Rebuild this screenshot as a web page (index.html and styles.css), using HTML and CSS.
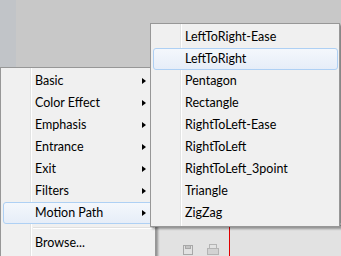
FILE: index.html
```html
<!DOCTYPE html>
<html lang="en">
<head>
    <meta charset="UTF-8">
    <meta name="viewport" content="width=device-width, initial-scale=1.0">
    <title>Motion Path Menu</title>
    <link rel="stylesheet" href="styles.css">
</head>
<body>
    <div class="app">
        <div class="top">
            <div class="strip"></div>
        </div>
        <div class="bottom">
            <div class="bottom-inner">
                <div class="tools">
                    <svg class="tool" width="12" height="12" viewBox="0 0 12 12">
                        <rect x="1.5" y="1.5" width="9" height="9" fill="none" stroke="#a8a8a8"/>
                        <rect x="3.5" y="1.5" width="5" height="3" fill="#c4c4c4" stroke="#a8a8a8"/>
                    </svg>
                    <svg class="tool" width="14" height="12" viewBox="0 0 14 12">
                        <rect x="3.5" y="0.5" width="7" height="4" fill="none" stroke="#b4b4b4"/>
                        <rect x="1.5" y="4.5" width="11" height="6" fill="#d2d2d2" stroke="#b4b4b4"/>
                    </svg>
                </div>
                <div class="playhead"></div>
            </div>
        </div>
    </div>

    <!-- Main context menu -->
    <div class="menu main-menu">
        <div class="item">Basic<span class="arrow"></span></div>
        <div class="item">Color Effect<span class="arrow"></span></div>
        <div class="item">Emphasis<span class="arrow"></span></div>
        <div class="item">Entrance<span class="arrow"></span></div>
        <div class="item">Exit<span class="arrow"></span></div>
        <div class="item">Filters<span class="arrow"></span></div>
        <div class="item hot">Motion Path<span class="arrow"></span></div>
        <div class="separator"></div>
        <div class="item">Browse...</div>
    </div>

    <!-- Motion Path submenu -->
    <div class="menu sub-menu">
        <div class="item">LeftToRight-Ease</div>
        <div class="item hot">LeftToRight</div>
        <div class="item">Pentagon</div>
        <div class="item">Rectangle</div>
        <div class="item">RightToLeft-Ease</div>
        <div class="item">RightToLeft</div>
        <div class="item">RightToLeft_3point</div>
        <div class="item">Triangle</div>
        <div class="item">ZigZag</div>
    </div>
</body>
</html>
```

FILE: styles.css
```css
body {
    margin: 0;
    width: 341px;
    height: 256px;
    overflow: hidden;
    background-color: #c8c8c8;
    font-family: "Lato", "Liberation Sans", sans-serif;
    font-size: 12.5px;
    color: #000;
}

.app {
    display: flex;
    flex-direction: column;
    height: 256px;
}

.top {
    height: 228px;
}

.strip {
    width: 16px;
    height: 67px;
    background-color: #c1c4c8;
}

.bottom {
    flex: 1;
    background-color: #eeeeee;
    padding-top: 2px;
}

.bottom-inner {
    display: flex;
    height: 100%;
    border-top: 1px dotted #b4b4b4;
    background-color: #e2e2e2;
    overflow: hidden;
}

.tools {
    display: flex;
    gap: 12px;
    width: 229px;
    padding: 18px 0 0 182px;
    box-sizing: border-box;
}

.playhead {
    width: 1px;
    background-color: #e00000;
}

/* menus */
.menu {
    position: absolute;
    background-color: #f0f0f0;
    border: 1px solid #979797;
    padding: 2px 1px 2px 2px;
    box-shadow: 2px 2px 2px rgba(0, 0, 0, 0.35);
    background-image: linear-gradient(to right, transparent 29px, #e2e3e3 29px, #e2e3e3 30px, #ffffff 30px, #ffffff 31px, transparent 31px);
}

.main-menu {
    left: 0;
    top: 67px;
    bottom: 0;
    width: 151px;
    border-bottom: 0;
    padding-bottom: 0;
    overflow: hidden;
}

.sub-menu {
    left: 150px;
    top: 23px;
    width: 185px;
    z-index: 2;
}

.item {
    position: relative;
    height: 22px;
    line-height: 22px;
    padding-left: 32px;
    white-space: nowrap;
}

.item.hot {
    border: 1px solid #aed0f4;
    border-radius: 3px;
    height: 20px;
    line-height: 20px;
    padding-left: 31px;
    background: linear-gradient(to bottom, #f4f7fc, #e6edf8);
}

.arrow {
    position: absolute;
    right: 8px;
    top: 8px;
    width: 0;
    height: 0;
    border-left: 4px solid #000;
    border-top: 3.5px solid transparent;
    border-bottom: 3.5px solid transparent;
}

.item.hot .arrow {
    top: 7px;
    right: 7px;
}

.separator {
    height: 8px;
    margin-left: 30px;
    background: linear-gradient(to bottom, transparent 3px, #e0e0e0 3px, #e0e0e0 4px, #ffffff 4px, #ffffff 5px, transparent 5px);
}
```
